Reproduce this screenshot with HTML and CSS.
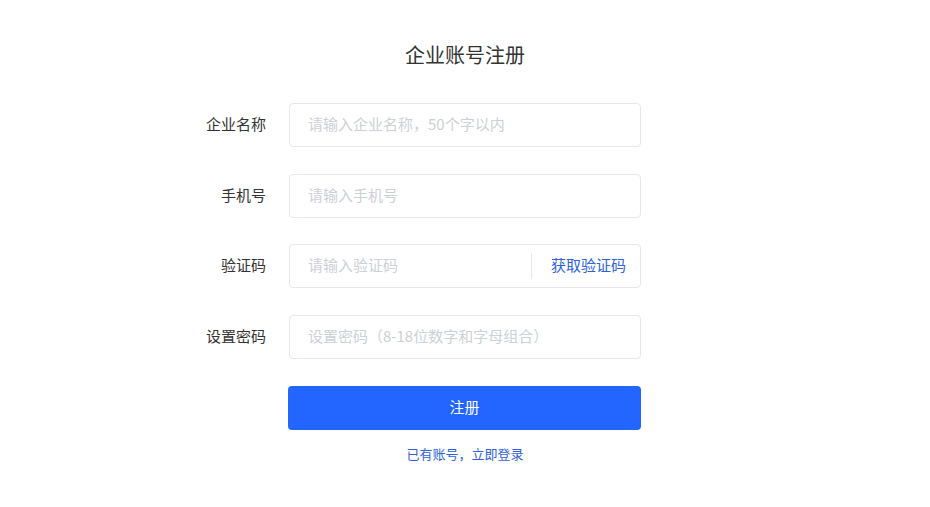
FILE: index.html
```html
<!DOCTYPE html>
<html lang="zh-CN">
<head>
  <meta charset="UTF-8" />
  <meta name="viewport" content="width=device-width, initial-scale=1.0"/>
  <title>企业账号注册</title>
  <link rel="stylesheet" href="styles.css">
</head>
<body>

  <div class="register">
    <h1 class="title">企业账号注册</h1>

    <form class="form" onsubmit="return false">
      <label class="label" for="company">企业名称</label>
      <div class="field">
        <input id="company" type="text" placeholder="请输入企业名称，50个字以内">
      </div>

      <label class="label" for="phone">手机号</label>
      <div class="field">
        <input id="phone" type="text" placeholder="请输入手机号">
      </div>

      <label class="label" for="code">验证码</label>
      <div class="field field-code">
        <input id="code" type="text" placeholder="请输入验证码">
        <span class="divider"></span>
        <a class="get-code" href="#">获取验证码</a>
      </div>

      <label class="label" for="password">设置密码</label>
      <div class="field">
        <input id="password" type="password" placeholder="设置密码（8-18位数字和字母组合）">
      </div>

      <div class="spacer"></div>
      <button class="submit" type="submit">注册</button>

      <div class="spacer"></div>
      <a class="login" href="#">已有账号，立即登录</a>
    </form>
  </div>

</body>
</html>
```

FILE: styles.css
```css
body {
  margin: 0;
  font-family: "Noto Sans CJK SC", "Liberation Sans", sans-serif;
  background: #fff;
  color: #333;
}
.register {
  width: 930px;
  padding-top: 41px;
}
.title {
  margin: 0 0 34px;
  text-align: center;
  font-size: 20px;
  font-weight: normal;
  line-height: 28px;
  color: #333;
}
.form {
  display: grid;
  grid-template-columns: 1fr 352px 1fr;
  row-gap: 26.7px;
  align-items: center;
}
.form > :nth-child(2n+1) { grid-column: 1; }
.form > :nth-child(2n) { grid-column: 2; }
.label {
  justify-self: end;
  padding-right: 23px;
  padding-bottom: 3px;
  font-size: 15px;
  color: #333;
}
.field {
  display: flex;
  align-items: center;
  height: 44px;
  box-sizing: border-box;
  border: 1px solid #e4e7ed;
  border-radius: 4px;
  background: #fff;
}
.field input {
  flex: 1;
  min-width: 0;
  height: 100%;
  box-sizing: border-box;
  padding: 0 18px 3px;
  border: none;
  outline: none;
  background: transparent;
  font-family: inherit;
  font-size: 15px;
  color: #333;
}
.field input::placeholder { color: #cdd0d6; }
.divider {
  width: 1px;
  height: 26px;
  background: #e4e7ed;
}
.get-code {
  padding: 0 14px 3px 19px;
  font-size: 15px;
  color: #2d62d8;
  text-decoration: none;
  white-space: nowrap;
}
.submit {
  height: 44px;
  margin-left: -1px;
  padding-bottom: 3px;
  border: none;
  border-radius: 4px;
  background: #2266ff;
  color: #fff;
  font-family: inherit;
  font-size: 15px;
  cursor: pointer;
}
.login {
  justify-self: center;
  margin-top: -12px;
  font-size: 13px;
  color: #2d62d8;
  text-decoration: none;
}
```
